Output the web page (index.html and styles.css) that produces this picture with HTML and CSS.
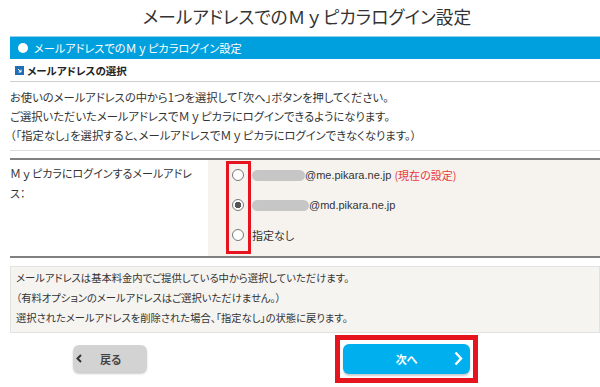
FILE: index.html
```html
<!DOCTYPE html>
<html>
<head>
<title>メールアドレスでのＭｙピカラログイン設定</title>
<link rel="stylesheet" href="styles.css">
</head>
<body>

<div id="page">
  <h1 class="page-title">メールアドレスでの<span class="fw">Ｍｙ</span>ピカラログイン設定</h1>

  <div class="bar-title"><span class="bar-dot"></span>メールアドレスでの<span class="fw">Ｍｙ</span>ピカラログイン設定</div>

  <div class="sub-title">
    <svg class="sub-icon" width="9" height="9" viewBox="0 0 9 9">
      <rect x="0" y="0" width="9" height="9" fill="#1f6db5"/>
      <path d="M3 3 L6 6 M6 3.5 V6 H3.5" stroke="#fff" stroke-width="1" fill="none"/>
    </svg>
    メールアドレスの選択
  </div>

  <div class="lead">
    <p>お使いのメールアドレスの中から1つを選択して「次へ」ボタンを押してください。</p>
    <p>ご選択いただいたメールアドレスで<span class="fw">Ｍｙ</span>ピカラにログインできるようになります。</p>
    <p>（「指定なし」を選択すると、メールアドレスで<span class="fw">Ｍｙ</span>ピカラにログインできなくなります。）</p>
  </div>

  <!-- Selection table -->
  <div class="form-table">
    <div class="form-label"><span class="fw">Ｍｙ</span>ピカラにログインするメールアドレ<br>ス：</div>
    <div class="form-options">
      <div class="highlight-radios"></div>
      <label class="option">
        <input type="radio" name="mail">
        <span class="masked"></span><span class="addr">@me.pikara.ne.jp</span>
        <span class="current">(現在の設定)</span>
      </label>
      <label class="option">
        <input type="radio" name="mail" checked>
        <span class="masked wide"></span><span class="addr">@md.pikara.ne.jp</span>
      </label>
      <label class="option">
        <input type="radio" name="mail">
        <span>指定なし</span>
      </label>
    </div>
  </div>

  <div class="note-box">
    <p>メールアドレスは基本料金内でご提供している中から選択していただけます。</p>
    <p>（有料オプションのメールアドレスはご選択いただけません。）</p>
    <p>選択されたメールアドレスを削除された場合、「指定なし」の状態に戻ります。</p>
  </div>

  <div class="button-row">
    <button id="backButton" class="btn btn-back">
      <svg class="chev-left" width="6" height="9" viewBox="0 0 6 9"><path d="M5 1 L1.5 4.5 L5 8" stroke="#333" stroke-width="2" fill="none"/></svg>
      戻る
    </button>
    <div class="next-frame">
      <button id="nextButton" class="btn btn-next">
        次へ
        <svg class="chev-right" width="9" height="15" viewBox="0 0 9 15"><path d="M1.5 1.5 L7 7.5 L1.5 13.5" stroke="#fff" stroke-width="2.4" fill="none"/></svg>
      </button>
    </div>
  </div>
</div>

</body>
</html>
```

FILE: styles.css
```css
body {
  margin: 0;
  font-family: "Noto Sans CJK JP", sans-serif;
  font-feature-settings: "palt";
  color: #333;
  background: #fff;
  overflow: hidden;
}

#page {
  width: 590px;
  padding-left: 10px;
}

p {
  margin: 0;
}

/* full-width latin keeps its full width */
.fw {
  font-feature-settings: normal;
}

/* Page heading */
.page-title {
  margin: 0;
  height: 36px;
  padding-left: 4px;
  font-size: 17.7px;
  font-weight: normal;
  line-height: 32px;
  text-align: center;
  color: #333;
}

/* Blue section bar */
.bar-title {
  display: flex;
  align-items: center;
  height: 22px;
  background-color: #009fde;
  border-top: 1px solid #8fd0ee;
  color: #fff;
  font-size: 11.2px;
}

.bar-dot {
  width: 10px;
  height: 10px;
  margin: 0 6px 0 8px;
  border-radius: 50%;
  background: #fff;
}

.sub-title {
  display: flex;
  align-items: center;
  height: 22px;
  border-bottom: 1px solid #cfcfcf;
  font-size: 10.5px;
  font-weight: bold;
  color: #222;
}

.sub-icon {
  margin: 0 3px 0 5px;
}

.lead {
  padding: 6px 0 5px;
  border-bottom: 1px solid #dcdcdc;
  font-size: 11.3px;
  line-height: 19px;
}

/* Table */
.form-table {
  display: flex;
  margin-top: 7px;
  border-top: 2px solid #808080;
  border-bottom: 2px solid #808080;
}

.form-label {
  width: 190px;
  padding: 3px 8px 0 0;
  font-size: 11px;
  line-height: 20px;
}

.form-options {
  position: relative;
  flex: 1;
  padding: 0 0 6px;
  background: #f6f3ef;
}

.option {
  display: flex;
  align-items: center;
  height: 30px;
  padding-left: 24px;
  font-size: 11px;
}

.option input {
  appearance: none;
  width: 12px;
  height: 12px;
  margin: 0 8px 0 0;
  border: 1px solid #777;
  border-radius: 50%;
  background: #fff;
}

.option input:checked {
  background: radial-gradient(circle, #555 0 3px, #fff 3.5px);
}

.masked {
  display: inline-block;
  width: 53px;
  height: 11px;
  border-radius: 6px;
  background: #c6c6c6;
}

.masked.wide {
  width: 57px;
}

.addr {
  font-family: "Liberation Sans", sans-serif;
  font-size: 11px;
  color: #333;
}

.current {
  margin-left: 3px;
  font-size: 11px;
  color: #e8383d;
}

/* Red annotation around the radio buttons */
.highlight-radios {
  position: absolute;
  left: 18px;
  top: 1px;
  width: 19px;
  height: 87px;
  border: 3px solid #e6141e;
}

.note-box {
  margin-top: 8px;
  padding: 1px 5px 4px;
  background: #f5f4f1;
  border: 1px solid #e2e2e0;
  font-size: 10.3px;
  line-height: 20px;
}

/* Buttons */
.button-row {
  display: flex;
  align-items: center;
  height: 51px;
  padding-left: 63px;
}

.btn {
  position: relative;
  border: none;
  font-family: "Noto Sans CJK JP", sans-serif;
  font-feature-settings: "palt";
  font-weight: bold;
  cursor: pointer;
  border-radius: 6px;
  box-shadow: 0 2px 2px rgba(0,0,0,0.2);
}

.btn-back {
  width: 74px;
  height: 27px;
  padding: 0 0 0 27px;
  text-align: left;
  background-color: #d3d3d3;
  color: #444;
  font-size: 11px;
}

.chev-left {
  position: absolute;
  left: 3px;
  top: 9px;
}

.next-frame {
  margin-left: 188px;
  padding: 4px 3px;
  border: 5px solid #e6141e;
}

.btn-next {
  display: block;
  width: 127px;
  height: 30px;
  background-color: #00b0ee;
  color: #fff;
  font-size: 11px;
}

.chev-right {
  position: absolute;
  right: 7px;
  top: 7px;
}
```
